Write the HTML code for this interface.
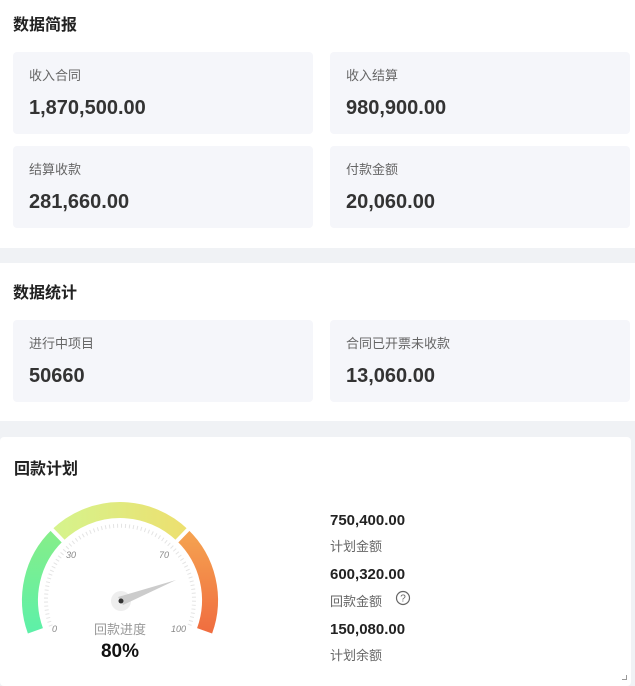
<!DOCTYPE html>
<html><head><meta charset="utf-8"><style>
*{margin:0;padding:0;box-sizing:border-box}
body{width:635px;height:686px;background:#fff;font-family:"Liberation Sans","Noto Sans CJK SC",sans-serif;position:relative;overflow:hidden}
.a{position:absolute}
.t{font-size:16px;font-weight:bold;color:#222}
.card{position:absolute;background:#f5f6fa;border-radius:4px;width:300px;height:82px}
.card .l{position:absolute;left:16px;top:13px;font-size:13px;color:#666}
.card .v{position:absolute;left:16px;top:45px;font-size:20px;font-weight:bold;color:#333}
.band{position:absolute;left:0;width:635px;background:#f0f2f5}
.rv{position:absolute;left:330px;font-size:15px;font-weight:bold;color:#222}
.rl{position:absolute;left:330px;font-size:13px;color:#666}
</style></head><body>
<div class="a t" style="left:13px;top:11px">数据简报</div>
<div class="card" style="left:13px;top:52px"><div class="l">收入合同</div><div class="v">1,870,500.00</div></div>
<div class="card" style="left:330px;top:52px"><div class="l">收入结算</div><div class="v">980,900.00</div></div>
<div class="card" style="left:13px;top:146px"><div class="l">结算收款</div><div class="v">281,660.00</div></div>
<div class="card" style="left:330px;top:146px"><div class="l">付款金额</div><div class="v">20,060.00</div></div>
<div class="band" style="top:248px;height:15px"></div>
<div class="a t" style="left:13px;top:279px">数据统计</div>
<div class="card" style="left:13px;top:320px"><div class="l">进行中项目</div><div class="v">50660</div></div>
<div class="card" style="left:330px;top:320px"><div class="l">合同已开票未收款</div><div class="v">13,060.00</div></div>
<div class="band" style="top:421px;height:265px"></div>
<div class="a" style="left:0;top:437px;width:631px;height:249px;background:#fff;border-radius:4px"></div>
<div class="a t" style="left:14px;top:455px">回款计划</div>
<svg class="a" style="left:0;top:0" width="635" height="686">
<defs>
<linearGradient id="g1" x1="0" y1="1" x2="0" y2="0"><stop offset="0" stop-color="#5ef0a8"/><stop offset="1" stop-color="#84ee8a"/></linearGradient>
<linearGradient id="g2" x1="0" y1="0" x2="1" y2="0"><stop offset="0" stop-color="#d6f38c"/><stop offset="1" stop-color="#ece070"/></linearGradient>
<linearGradient id="g3" x1="0" y1="0" x2="0" y2="1"><stop offset="0" stop-color="#f5a150"/><stop offset="1" stop-color="#f06e40"/></linearGradient>
</defs>
<path d="M35.4 630.8 A90 90 0 0 1 57.5 535.3" fill="none" stroke="url(#g1)" stroke-width="16"/>
<path d="M57.5 535.3 A90 90 0 0 1 182.5 535.3" fill="none" stroke="url(#g2)" stroke-width="16"/>
<path d="M182.5 535.3 A90 90 0 0 1 204.6 630.8" fill="none" stroke="url(#g3)" stroke-width="16"/>
<line x1="64.4" y1="542.4" x2="50.5" y2="528" stroke="#fff" stroke-width="4"/>
<line x1="175.6" y1="542.4" x2="189.5" y2="528" stroke="#fff" stroke-width="4"/>
<path d="M50.8 626 A74 74 0 1 1 189.2 626" fill="none" stroke="#e4e4e4" stroke-width="4" stroke-dasharray="1 3"/>
<g font-size="9" font-style="italic" fill="#888"><text x="52" y="632">0</text><text x="66" y="558">30</text><text x="159" y="558">70</text><text x="171" y="632">100</text></g>
<circle cx="121" cy="601" r="10" fill="#eee"/>
<polygon points="118,597 176,580 123,605" fill="#ccc"/>
<circle cx="121" cy="601" r="2.5" fill="#333"/>
</svg>
<div class="a" style="left:70px;top:619px;width:100px;text-align:center;font-size:13px;color:#999">回款进度</div>
<div class="a" style="left:70px;top:641px;width:100px;text-align:center;font-size:19px;font-weight:bold;color:#111">80%</div>
<div class="rv" style="top:512px">750,400.00</div>
<div class="rl" style="top:536px">计划金额</div>
<div class="rv" style="top:566px">600,320.00</div>
<div class="rl" style="top:591px">回款金额</div>
<svg class="a" style="left:395px;top:590px" width="16" height="16"><circle cx="8" cy="8" r="6.5" fill="none" stroke="#666" stroke-width="1.2"/><text x="8" y="11.5" font-size="10" text-anchor="middle" fill="#666">?</text></svg>
<div class="rv" style="top:621px">150,080.00</div>
<div class="rl" style="top:645px">计划余额</div>
<div class="a" style="left:622px;top:675px;width:5px;height:5px;border-right:1px solid #999;border-bottom:1px solid #999"></div>
</body></html>
